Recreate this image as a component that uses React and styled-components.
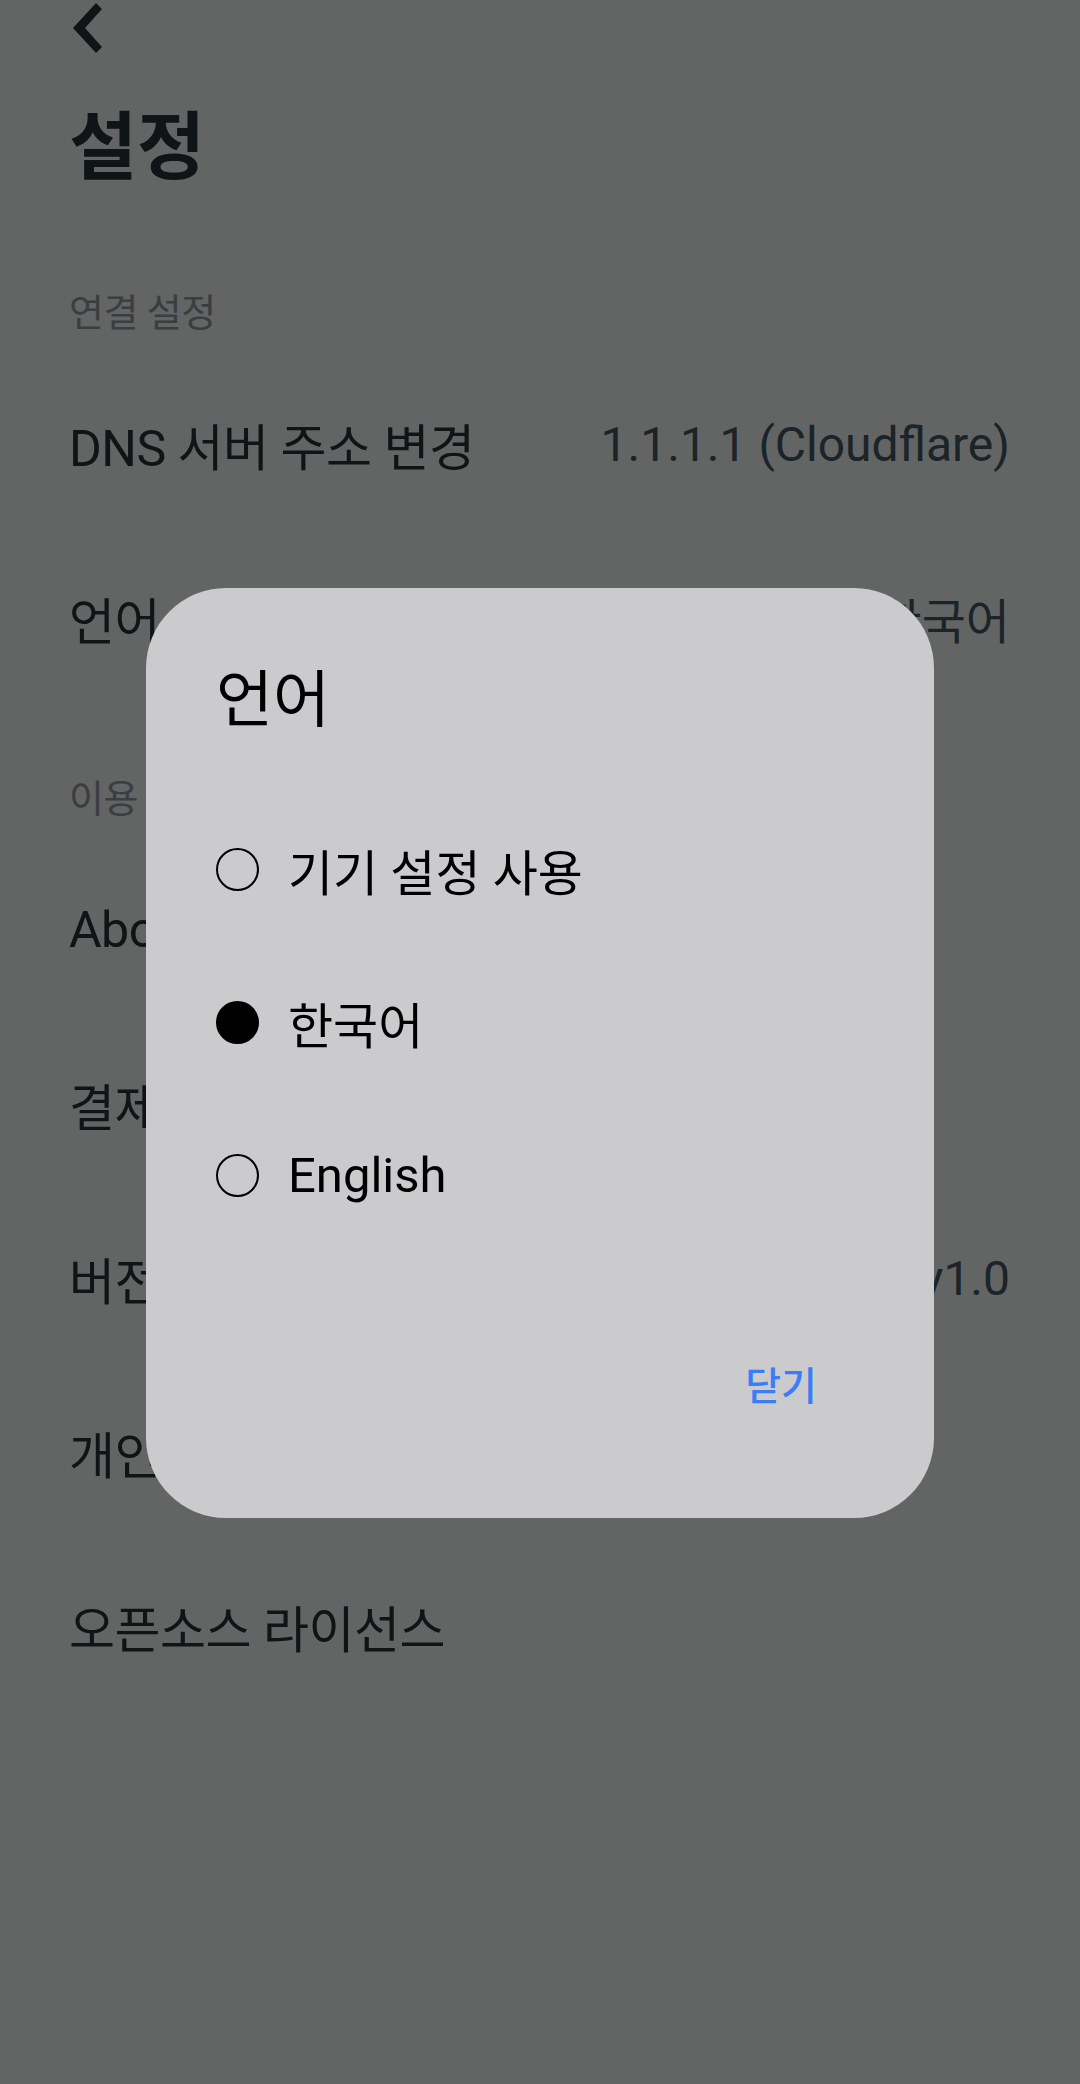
import React from 'react';
import styled, { createGlobalStyle } from 'styled-components';

const GlobalStyle = createGlobalStyle`
  html, body {
    margin: 0;
    padding: 0;
    background: #f8f9fb;
  }
  body {
    font-family: Roboto, "Noto Sans CJK KR", sans-serif;
  }
`;

const Page = styled.div`
  min-height: 2084px;
  padding: 0 70px 0 69px;
  box-sizing: border-box;
  color: #263238;
`;

const Toolbar = styled.div`
  height: 56px;
  display: flex;
  align-items: flex-start;
  padding-top: 3px;
  box-sizing: border-box;
`;

const BackButton = styled.button`
  border: none;
  background: none;
  padding: 0 0 0 3px;
  margin: 0;
  color: #263238;
  display: flex;
`;

const Title = styled.h1`
  margin: 55px 0 34px;
  font-size: 74px;
  line-height: 74px;
  font-weight: 700;
`;

const SectionHeader = styled.div`
  height: 138px;
  box-sizing: border-box;
  padding-top: 75px;
  font-size: 38px;
  line-height: 38px;
  letter-spacing: -0.5px;
  color: #9598a0;
`;

const Row = styled.div`
  height: 174px;
  display: flex;
  align-items: center;
  justify-content: space-between;
`;

const Label = styled.span`
  font-size: 50px;
  letter-spacing: -0.5px;
`;

const Value = styled.span`
  font-size: 48px;
  color: #455a64;
`;

// 모달 뒤 반투명 배경
const Scrim = styled.div`
  position: fixed;
  inset: 0;
  background: rgba(0, 0, 0, 0.6);
  display: flex;
  align-items: center;
  justify-content: center;
  padding-top: 22px;
`;

const Dialog = styled.div`
  width: 788px;
  height: 930px;
  box-sizing: border-box;
  border-radius: 80px;
  background: #cbcbcd;
  padding: 68px 97px 0 70px;
  color: #000;
  display: flex;
  flex-direction: column;
`;

const DialogTitle = styled.h2`
  margin: 0;
  font-size: 62px;
  line-height: 90px;
  font-weight: 400;
`;

const OptionList = styled.div`
  margin-top: 47px;
  display: flex;
  flex-direction: column;
`;

const Option = styled.label`
  height: 153px;
  display: flex;
  align-items: center;
  gap: 29px;
  font-size: 49px;
`;

const Radio = styled.span`
  width: 43px;
  height: 43px;
  box-sizing: border-box;
  border-radius: 50%;
  border: 2px solid #000;
  background: ${(p) => (p.$checked ? '#000' : 'transparent')};
  flex-shrink: 0;
`;

const Actions = styled.div`
  margin-top: 81px;
  display: flex;
  justify-content: flex-end;
`;

const TextButton = styled.button`
  height: 100px;
  border: none;
  background: none;
  padding: 0 20px;
  font-family: Roboto, "Noto Sans CJK KR", sans-serif;
  font-size: 39px;
  font-weight: 500;
  color: #3b7df6;
`;

const connection = [
  { label: 'DNS 서버 주소 변경', value: '1.1.1.1 (Cloudflare)' },
  { label: '언어', value: '한국어' },
];

const usage = [
  { label: 'About', value: '' },
  { label: '결제 내역', value: '' },
  { label: '버전', value: 'v1.0' },
  { label: '개인정보 처리방침', value: '' },
  { label: '오픈소스 라이선스', value: '' },
];

const languages = [
  { label: '기기 설정 사용', checked: false },
  { label: '한국어', checked: true },
  { label: 'English', checked: false },
];

const Chevron = () => (
  <svg width="31" height="50" viewBox="0 0 31 50">
    <path d="M30 6 L24 0 L1 25 L24 50 L30 44 L13 25 Z" fill="currentColor" />
  </svg>
);

const App = () => {
  return (
    <>
      <GlobalStyle />
      <Page>
        <Toolbar>
          <BackButton><Chevron /></BackButton>
        </Toolbar>
        <Title>설정</Title>

        <SectionHeader>연결 설정</SectionHeader>
        {connection.map((r) => (
          <Row key={r.label}>
            <Label>{r.label}</Label>
            <Value>{r.value}</Value>
          </Row>
        ))}

        <SectionHeader>이용</SectionHeader>
        {usage.map((r) => (
          <Row key={r.label}>
            <Label>{r.label}</Label>
            <Value>{r.value}</Value>
          </Row>
        ))}
      </Page>

      <Scrim>
        <Dialog>
          <DialogTitle>언어</DialogTitle>
          <OptionList>
            {languages.map((l) => (
              <Option key={l.label}>
                <Radio $checked={l.checked} />
                {l.label}
              </Option>
            ))}
          </OptionList>
          <Actions>
            <TextButton>닫기</TextButton>
          </Actions>
        </Dialog>
      </Scrim>
    </>
  );
};

export default App;
